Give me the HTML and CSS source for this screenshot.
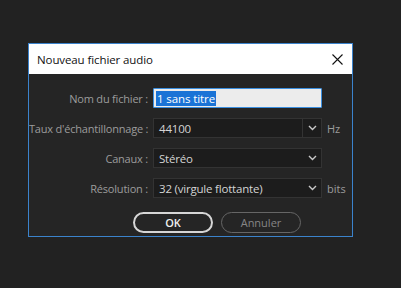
FILE: index.html
```html
<!DOCTYPE html>
<html lang="fr">
<head>
<meta charset="utf-8">
<title>Nouveau fichier audio</title>
<link rel="stylesheet" href="styles.css">
</head>
<body>
<div class="dialog">
  <div class="titlebar">
    <span class="title">Nouveau fichier audio</span>
    <svg class="close" width="11" height="11" viewBox="0 0 11 11"><path d="M0.5 0.5 L10.5 10.5 M10.5 0.5 L0.5 10.5" stroke="#111" stroke-width="1.1" fill="none"/></svg>
  </div>
  <div class="content">
    <div class="form">
      <label class="lbl">Nom du fichier :</label>
      <div class="textinput"><span class="sel">1 sans titre</span></div>
      <span class="suffix"></span>

      <label class="lbl">Taux d'échantillonnage :</label>
      <div class="combo split"><span class="val">44100</span><span class="btn"><svg width="9" height="6" viewBox="0 0 9 6"><path d="M1 1 L4.5 4.5 L8 1" stroke="#c8c8c8" stroke-width="1.4" fill="none"/></svg></span></div>
      <span class="suffix">Hz</span>

      <label class="lbl">Canaux :</label>
      <div class="combo"><span class="val">Stéréo</span><span class="btn"><svg width="9" height="6" viewBox="0 0 9 6"><path d="M1 1 L4.5 4.5 L8 1" stroke="#c8c8c8" stroke-width="1.4" fill="none"/></svg></span></div>
      <span class="suffix"></span>

      <label class="lbl">Résolution :</label>
      <div class="combo"><span class="val">32 (virgule flottante)</span><span class="btn"><svg width="9" height="6" viewBox="0 0 9 6"><path d="M1 1 L4.5 4.5 L8 1" stroke="#c8c8c8" stroke-width="1.4" fill="none"/></svg></span></div>
      <span class="suffix">bits</span>
    </div>
    <div class="buttons">
      <button class="pill ok">OK</button>
      <button class="pill cancel">Annuler</button>
    </div>
  </div>
</div>
</body>
</html>
```

FILE: styles.css
```css
html, body {
  margin: 0;
  padding: 0;
  background: #222222;
}
body {
  width: 401px;
  height: 288px;
  overflow: hidden;
  padding: 43px 0 0 28px;
  box-sizing: border-box;
  font-family: "Open Sans", "Noto Sans", "Liberation Sans", sans-serif;
}
.dialog {
  width: 325px;
  height: 194px;
  box-sizing: border-box;
  border: 1px solid #3b83cc;
  background: #252525;
}
.titlebar {
  height: 30px;
  background: #ffffff;
  display: flex;
  align-items: center;
  justify-content: space-between;
  padding: 0 9px 0 8px;
}
.title {
  font-size: 11.5px;
  color: #111;
  letter-spacing: -0.1px;
}
.close { display: block; margin-top: 1px; }
.content {
  padding-top: 14px;
}
.form {
  display: grid;
  grid-template-columns: 119px 169px auto;
  column-gap: 5px;
  row-gap: 10px;
  grid-auto-rows: 20px;
  align-items: center;
}
.lbl {
  text-align: right;
  font-size: 11px;
  color: #9c9c9c;
  white-space: nowrap;
  letter-spacing: -0.2px;
}
.textinput {
  height: 20px;
  box-sizing: border-box;
  border: 1px solid #3b8fe0;
  background: #ececec;
  display: flex;
  align-items: center;
  padding-left: 2px;
  border-radius: 1px;
}
.sel {
  background: #1a73d6;
  color: #ffffff;
  font-size: 11.5px;
  line-height: 15px;
  padding: 0 1px;
  letter-spacing: -0.1px;
}
.combo {
  height: 20px;
  box-sizing: border-box;
  border: 1px solid #333333;
  background: #1c1c1c;
  display: flex;
  align-items: center;
  justify-content: space-between;
  color: #d4d4d4;
  font-size: 11.5px;
}
.val { padding-left: 5px; letter-spacing: -0.2px; }
.btn {
  width: 18px;
  height: 18px;
  display: flex;
  align-items: center;
  justify-content: center;
}
.combo.split .btn { border-left: 1px solid #333333; }
.suffix {
  font-size: 11px;
  color: #9c9c9c;
}
.buttons {
  display: flex;
  gap: 8px;
  padding-left: 104px;
  margin-top: 14px;
}
.pill {
  width: 80px;
  height: 21px;
  box-sizing: border-box;
  border-radius: 10.5px;
  background: transparent;
  font-family: "Open Sans", "Noto Sans", sans-serif;
  font-size: 11px;
  padding: 0;
  line-height: 16px;
}
.ok {
  border: 2px solid #d6d6d6;
  color: #f0f0f0;
  font-weight: 600;
}
.cancel {
  border: 1.5px solid #666666;
  color: #858585;
}
```
